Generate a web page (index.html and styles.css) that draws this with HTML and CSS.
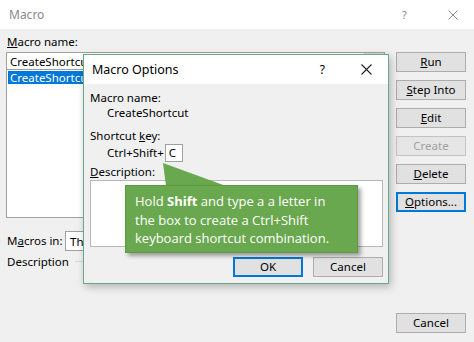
FILE: index.html
```html
<!DOCTYPE html>
<html>
<head>
<meta charset="utf-8">
<link rel="stylesheet" href="styles.css">
</head>
<body>
<div class="win">
  <div class="titlebar">
    <span class="title">Macro</span>
    <span class="tb-help">?</span>
    <svg class="tb-close" width="10" height="10" viewBox="0 0 10 10"><path d="M0.5 0.5L9.5 9.5M9.5 0.5L0.5 9.5" stroke="#8a8a8a" stroke-width="1" fill="none"/></svg>
  </div>
  <div class="body">
    <div class="left">
      <div class="lbl"><u>M</u>acro name:</div>
      <div class="namebox"><span>CreateShortcut</span><span class="upbtn"></span></div>
      <div class="list"><div class="item sel">CreateShortcut</div></div>
      <div class="inrow"><span class="lbl">M<u>a</u>cros in:</span><div class="combo">Thi</div></div>
      <div class="descrow"><span>Description</span><span class="groove"></span></div>
    </div>
    <div class="right">
      <button class="btn"><u>R</u>un</button>
      <button class="btn"><u>S</u>tep Into</button>
      <button class="btn"><u>E</u>dit</button>
      <button class="btn disabled">Create</button>
      <button class="btn"><u>D</u>elete</button>
      <button class="btn default"><u>O</u>ptions...</button>
      <div class="spacer"></div>
      <button class="btn">Cancel</button>
    </div>
  </div>
</div>

<div class="dlg">
  <div class="dlg-title">
    <span class="title">Macro Options</span>
    <span class="dlg-help">?</span>
    <svg class="dlg-close" width="11" height="11" viewBox="0 0 11 11"><path d="M0.5 0.5L10.5 10.5M10.5 0.5L0.5 10.5" stroke="#222" stroke-width="1.1" fill="none"/></svg>
  </div>
  <div class="dlg-body">
    <div class="lbl">Macro name:</div>
    <div class="indent">CreateShortcut</div>
    <div class="lbl sk">Shortcut <u>k</u>ey:</div>
    <div class="indent keyrow"><span>Ctrl+Shift+</span><span class="keybox">C</span></div>
    <div class="lbl"><u>D</u>escription:</div>
    <div class="textarea"></div>
    <div class="dlg-btns">
      <button class="btn default wide">OK</button>
      <button class="btn wide">Cancel</button>
    </div>
  </div>
</div>

<svg class="pointer" width="70" height="24" viewBox="0 0 70 24"><polygon points="1,0 4,23 64,23" fill="#6aa84f"/></svg>
<div class="callout">Hold <b>Shift</b> and type a a letter in<br>the box to create a Ctrl+Shift<br>keyboard shortcut combination.</div>
</body>
</html>
```
FILE: styles.css
```css
* { box-sizing: border-box; }
html, body { margin: 0; padding: 0; }
body {
  width: 474px; height: 342px; overflow: hidden;
  background: #f0f0f0;
  font-family: "Noto Sans", "Open Sans", sans-serif;
  font-size: 11.5px;
  color: #000;
  position: relative;
}
u { text-decoration: underline; text-underline-offset: 1px; }
.win { width: 474px; height: 342px; display: flex; flex-direction: column; }
.titlebar {
  height: 29px; background: #fff; display: flex; align-items: center;
  padding-left: 9px; font-size: 12px; color: #8a8a8a;
}
.titlebar .title { flex: 1; }
.tb-help { width: 10px; margin-right: 36px; font-size: 11px; }
.tb-close { margin-right: 16px; }
.body { flex: 1; display: flex; padding: 0 8px 9px 6px; gap: 11px; }
.left { width: 380px; display: flex; flex-direction: column; }
.lbl { line-height: 14px; }
.left > .lbl { padding: 6px 0 0 1px; height: 23px; }
.namebox {
  height: 18px; background: #fff; border: 1px solid #a0a0a0;
  display: flex; align-items: center; padding-left: 3px; position: relative;
}
.namebox span:first-child { flex: 1; }
.upbtn { width: 20px; height: 16px; background: #dcdcdc; border-left: 1px solid #c8c8c8; }
.list {
  height: 148px; background: #fff; border: 1px solid #a0a0a0; border-top: none;
  padding: 1px 0 0 1px;
}
.item { line-height: 13px; padding-left: 2px; width: 75px; }
.item.sel { background: #0078d7; color: #fff; }
.inrow { display: flex; align-items: center; margin-top: 13px; height: 20px; }
.inrow .lbl { width: 59px; padding-left: 1px; }
.combo { height: 20px; width: 40px; background: #fff; border: 1px solid #a0a0a0; padding: 2px 0 0 4px; overflow: hidden; }
.descrow { display: flex; align-items: center; margin-top: 3px; padding-left: 1px; height: 15px; }
.groove { flex: 1; margin-left: 6px; height: 1px; background: #dadada; }
.right { width: 70px; display: flex; flex-direction: column; padding-top: 23px; gap: 8px; }
.btn {
  font-family: inherit; font-size: 11.5px; color: #000;
  height: 20px; width: 70px; padding: 0; margin: 0;
  background: #e1e1e1; border: 1px solid #adadad;
  line-height: 16px; text-align: center;
}
.btn.default { border: 2px solid #0078d7; }
.btn.disabled { color: #a0a0a0; border-color: #c4c4c4; background: #e6e6e6; }
.spacer { flex: 1; }

.dlg {
  position: absolute; left: 83px; top: 54px; width: 306px; height: 230px;
  border: 1px solid #66a888; background: #f0f0f0;
  box-shadow: 2px 3px 8px rgba(0,0,0,0.25);
  display: flex; flex-direction: column;
}
.dlg-title {
  height: 29px; background: #fff; display: flex; align-items: center;
  padding-left: 8px; font-size: 12.5px;
}
.dlg-title .title { flex: 1; }
.dlg-help { margin-right: 36px; font-size: 12px; }
.dlg-close { margin-right: 16px; }
.dlg-body { flex: 1; padding: 7px 5px 0 6px; display: flex; flex-direction: column; }
.dlg-body .lbl { height: 15px; }
.indent { padding-left: 17px; height: 15px; line-height: 14px; }
.sk { margin-top: 8px; }
.keyrow { display: flex; align-items: center; height: 19px; margin: -1px 0 3px; }
.keybox {
  width: 18px; height: 18px; background: #fff; border: 1px solid #a0a0a0;
  margin-left: 1px; padding-left: 3px; line-height: 16px;
}
.textarea { height: 67px; background: #fff; border: 1px solid #b8b8b8; margin-top: 0; }
.dlg-btns { display: flex; justify-content: flex-end; gap: 10px; margin-top: 10px; }
.btn.wide { width: 70px; }

.pointer { position: absolute; left: 162px; top: 163px; }
.callout {
  position: absolute; left: 125px; top: 185px; width: 233px; height: 68px;
  background: #6aa84f; border: 1px solid #5e9a45; color: #fff;
  font-family: "Open Sans", "Noto Sans", sans-serif; font-size: 13px;
  line-height: 18.5px; padding: 6px 0 0 9px;
  box-shadow: 3px 3px 4px rgba(0,0,0,0.35);
}
.callout b { font-weight: 700; }
```
